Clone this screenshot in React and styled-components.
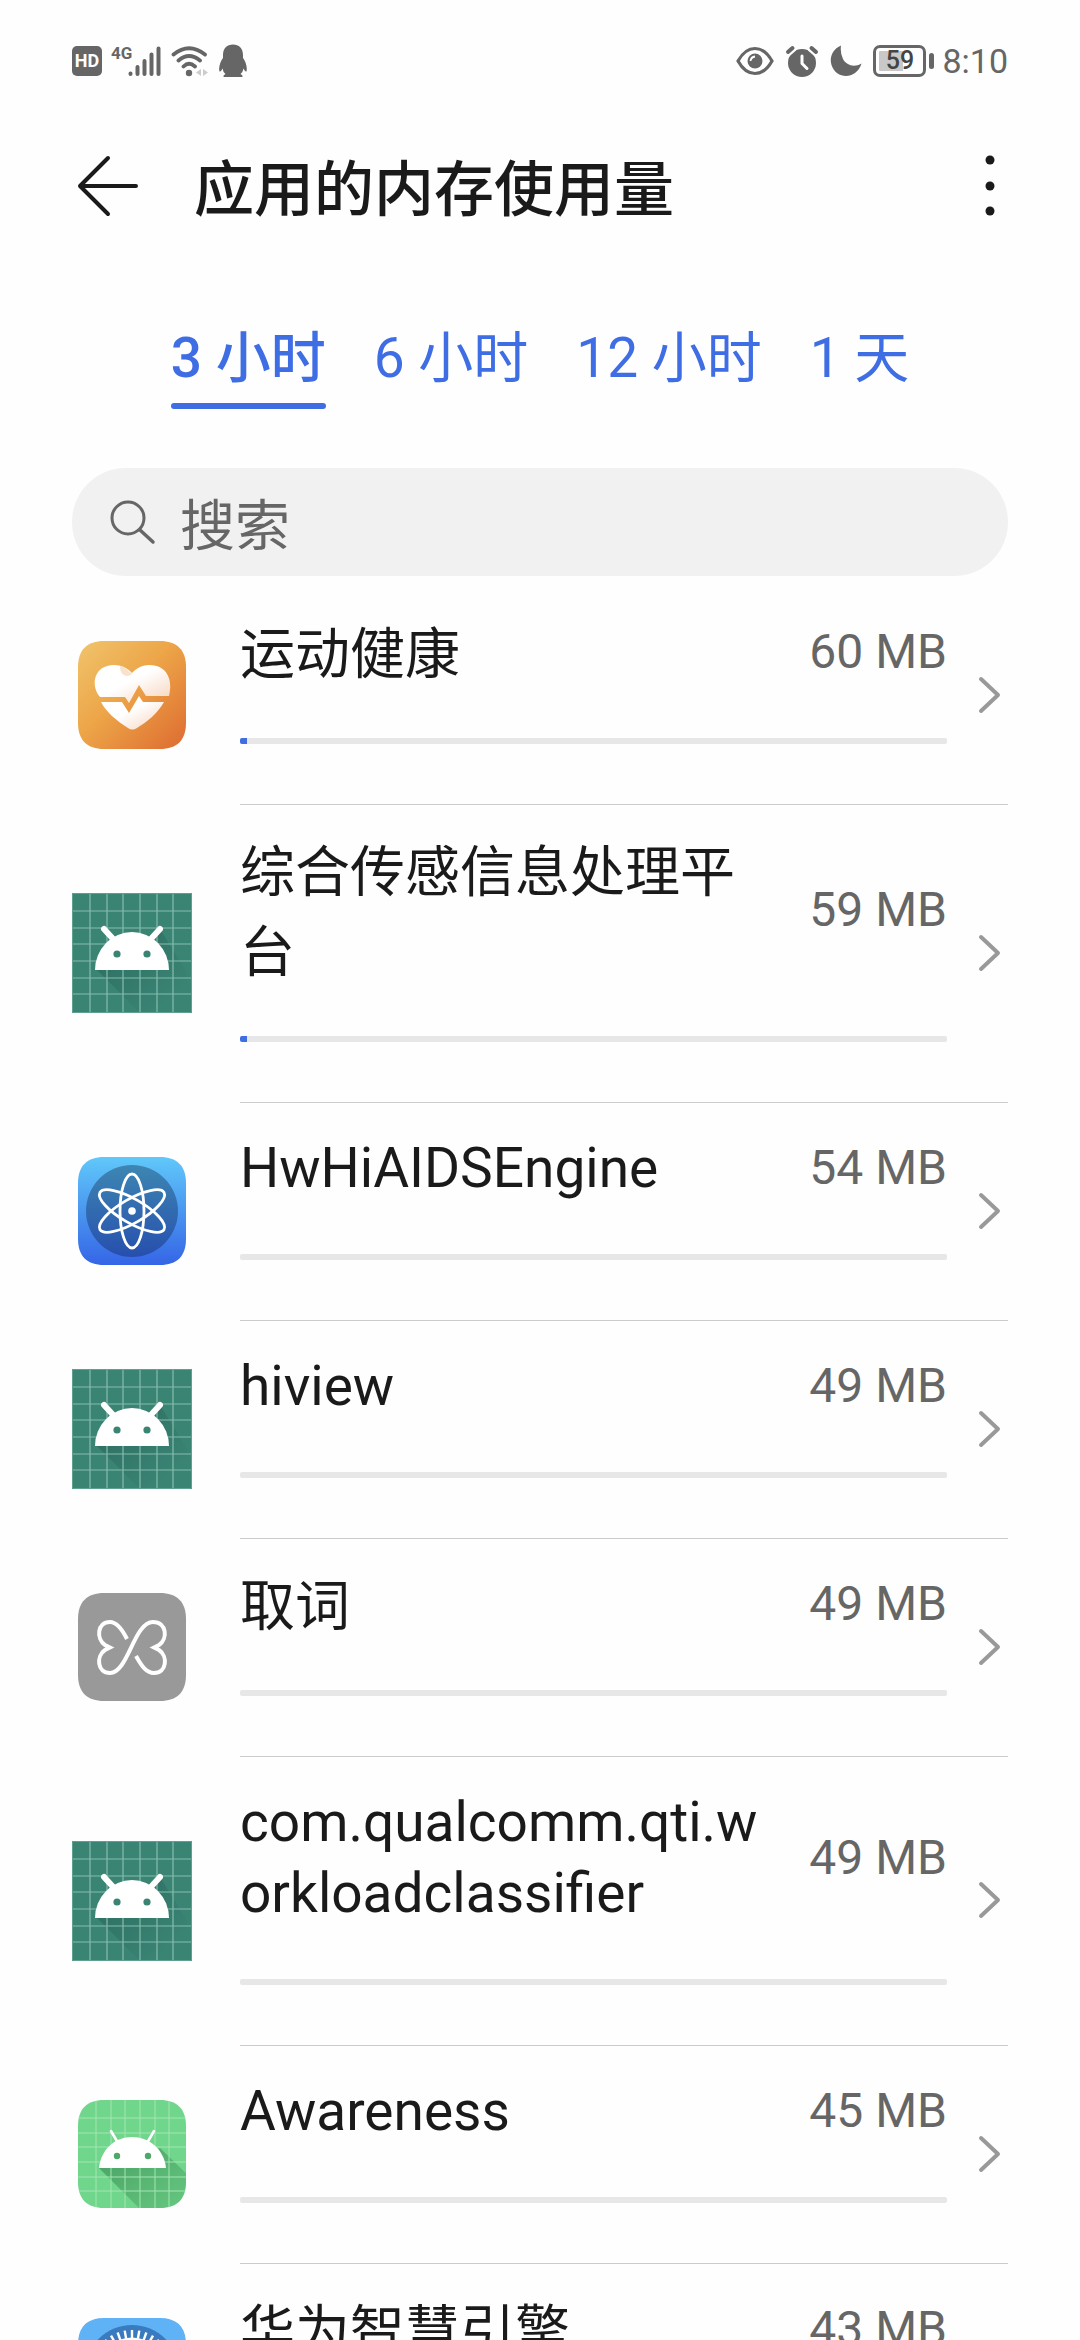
import { useState } from 'react';
import styled, { createGlobalStyle } from 'styled-components';

const GlobalStyle = createGlobalStyle`
  * {
    box-sizing: border-box;
  }
  html, body, #root {
    height: 100%;
  }
  body {
    margin: 0;
    overflow: hidden;
    background: #fefefe;
    color: #1a1a1a;
    font-family: Roboto, "Noto Sans CJK SC", sans-serif;
  }
  button, input {
    font: inherit;
    color: inherit;
    border: 0;
    padding: 0;
    background: none;
  }
`;

const Screen = styled.div`
  height: 100%;
  display: flex;
  flex-direction: column;
  overflow: hidden;
`;

const StatusBar = styled.div`
  flex: none;
  display: flex;
  justify-content: space-between;
  align-items: center;
  height: 120px;
  padding: 2px 72px 0;
  color: #666;
`;

const StatusGroup = styled.div`
  display: flex;
  align-items: center;
  gap: ${props => props.gap}px;
`;

const HdBadge = styled.span`
  width: 30px;
  height: 30px;
  border-radius: 5px;
  background: #666;
  color: #fefefe;
  font-size: 18px;
  font-weight: 700;
  line-height: 30px;
  text-align: center;
`;

const Network = styled.div`
  display: flex;
  align-items: flex-start;
  height: 32px;
  font-size: 17px;
  font-weight: 700;
  line-height: 16px;

  svg {
    margin-left: -4px;
  }
`;

const Battery = styled.div`
  display: flex;
  align-items: center;
  gap: 3px;
`;

const BatteryBody = styled.span`
  width: 53px;
  height: 32px;
  border: 3px solid #666;
  border-radius: 7px;
  padding: 3px;
  color: #444;
  font-size: 25px;
  font-weight: 500;
  line-height: 20px;
  text-align: center;
  background: linear-gradient(to right, #c8c8c8 59%, transparent 59%) content-box;
`;

const BatteryNub = styled.span`
  width: 5px;
  height: 16px;
  border-radius: 3px;
  background: #666;
`;

const Clock = styled.span`
  padding-left: 5px;
  font-size: 34px;
  line-height: 40px;
`;

const Header = styled.header`
  flex: none;
  display: flex;
  align-items: center;
  height: 132px;
  padding: 0 72px;
`;

const IconButton = styled.button`
  display: flex;
  justify-content: center;
  width: ${props => props.width}px;
  cursor: pointer;
`;

const Title = styled.h1`
  flex: 1;
  margin: 0;
  padding: 10px 0 0 50px;
  font-size: 60px;
  font-weight: 500;
  line-height: 88px;
`;

const Tabs = styled.div`
  flex: none;
  display: flex;
  justify-content: center;
  gap: 48px;
  padding: 66px 72px 0;
`;

const Tab = styled.button`
  color: #3f6de3;
  font-size: 55px;
  font-weight: ${props => props.active ? 500 : 400};
  line-height: 80px;
  cursor: pointer;

  &::after {
    content: '';
    display: block;
    height: 6px;
    margin-top: 5px;
    border-radius: 3px;
    background: ${props => props.active ? '#3f6de3' : 'transparent'};
  }
`;

const SearchBox = styled.label`
  flex: none;
  display: flex;
  align-items: center;
  gap: 24px;
  height: 108px;
  margin: 59px 72px 0;
  padding: 0 36px;
  border-radius: 54px;
  background: #f1f1f1;
`;

const SearchInput = styled.input`
  flex: 1;
  min-width: 0;
  height: 88px;
  padding-top: 8px;
  outline: none;
  font-size: 55px;
  &::placeholder {
    color: #666;
    opacity: 1;
  }
`;

const List = styled.ul`
  flex: none;
  list-style: none;
  margin: 0;
  padding: 10px 72px 0;
`;

const AppIcon = styled.svg`
  flex: none;
  width: 120px;
  height: 120px;
`;

const RowContent = styled.div`
  flex: 1;
  display: flex;
  align-items: center;
  justify-content: space-between;
  gap: 24px;
  min-width: 0;
  padding: 25px 0 60px;
  border-top: 1px solid #ccc;
`;

const Row = styled.li`
  display: flex;
  align-items: center;
  gap: 48px;

  &:first-child ${RowContent} {
    border-top-color: transparent;
  }
`;

const Usage = styled.div`
  flex: 1;
  min-width: 0;
`;

const UsageHead = styled.div`
  display: flex;
  align-items: center;
  justify-content: space-between;
  gap: 48px;
  min-height: 80px;
  margin-bottom: 46px;
`;

const Name = styled.div`
  padding: ${props => props.latin ? '5px 0 4px' : '2px 0 0'};
  margin-bottom: ${props => props.latin ? 0 : -2}px;
  font-size: 55px;
  line-height: ${props => props.latin ? 71 : 80}px;
  word-break: break-all;
`;

const Memory = styled.div`
  flex: none;
  color: #666;
  font-size: 48px;
  line-height: 56px;
`;

const Track = styled.div`
  height: 6px;
  border-radius: 2px;
  overflow: hidden;
  background: #e7e7e7;
`;

const Fill = styled.div`
  height: 6px;
  background: #3f6de3;
`;

const Chevron = styled.svg`
  flex: none;
  width: 37px;
  height: 40px;
  margin-top: 33px;
`;

const ROUNDED = 'M32 6H88C105 6 114 15 114 32V88C114 105 105 114 88 114H32C15 114 6 105 6 88V32C6 15 15 6 32 6Z';

function HealthIcon() {
  return (
    <AppIcon viewBox="0 0 120 120" aria-hidden="true">
      <defs>
        <linearGradient id="health-bg" x1="0" y1="0" x2="1" y2="1">
          <stop offset="0" stopColor="#f0c46c" />
          <stop offset="0.45" stopColor="#eda548" />
          <stop offset="1" stopColor="#dd6b30" />
        </linearGradient>
        <linearGradient id="health-heart" x1="0" y1="0" x2="1" y2="1">
          <stop offset="0.45" stopColor="#fff" />
          <stop offset="1" stopColor="#f6d3bb" />
        </linearGradient>
      </defs>
      <path d={ROUNDED} fill="url(#health-bg)" />
      <path d="M28 62C18 50 22 30 42 30C51 30 56 34 60 38C64 34 69 30 77 30C96 30 101 46 97 61H74L67 50L57 68L53 62Z" fill="url(#health-heart)" />
      <path d="M48 31C53 32 57 36 60 39C55 43 48 41 48 31Z" fill="#f5cfa8" opacity="0.6" />
      <path d="M29 67H50L57 78L67 61L71 67H92C86 78 75 87 65 93Q60 96 56 93C45 86 34 77 29 67Z" fill="url(#health-heart)" />
    </AppIcon>
  );
}

function AndroidIcon() {
  const lines = [18, 35, 51, 68, 85, 101];
  return (
    <AppIcon viewBox="0 0 120 120" aria-hidden="true">
      <defs>
        <linearGradient id="android-shade" x1="0" y1="0" x2="1" y2="1">
          <stop offset="0.2" stopColor="#1f594f" stopOpacity="0.45" />
          <stop offset="0.8" stopColor="#1f594f" stopOpacity="0" />
        </linearGradient>
      </defs>
      <path d="M0 0H120V120H0Z" fill="#3a8474" />
      <path d="M24 76L68 120H120V88L88 36Z" fill="url(#android-shade)" />
      {lines.map(n => (
        <path key={n} d={`M${n} 0V120M0 ${n}H120`} stroke="#86bcae" strokeWidth="1.2" />
      ))}
      <path d="M0.5 0.5H119.5V119.5H0.5Z" fill="none" stroke="#5fa091" />
      <path d="M23 77A37 38 0 0 1 97 77Z" fill="#fff" />
      <path d="M32 36L43 48M88 36L77 48" stroke="#fff" strokeWidth="6" strokeLinecap="round" />
      <circle cx="45" cy="61" r="3.6" fill="#3a8474" />
      <circle cx="75" cy="61" r="3.6" fill="#3a8474" />
    </AppIcon>
  );
}

function AtomIcon() {
  return (
    <AppIcon viewBox="0 0 120 120" aria-hidden="true">
      <defs>
        <linearGradient id="atom-bg" x1="0" y1="0" x2="0" y2="1">
          <stop offset="0" stopColor="#60c8fa" />
          <stop offset="1" stopColor="#3565e6" />
        </linearGradient>
        <linearGradient id="atom-disc" x1="0" y1="0" x2="0" y2="1">
          <stop offset="0" stopColor="#3d86b2" />
          <stop offset="1" stopColor="#274fae" />
        </linearGradient>
      </defs>
      <path d={ROUNDED} fill="url(#atom-bg)" />
      <circle cx="60" cy="60" r="46" fill="url(#atom-disc)" />
      {[0, 60, 120].map(angle => (
        <ellipse key={angle} cx="60" cy="60" rx="12" ry="37" transform={`rotate(${angle} 60 60)`} fill="none" stroke="#fff" strokeWidth="2.8" />
      ))}
      <circle cx="60" cy="60" r="3.8" fill="#fff" />
    </AppIcon>
  );
}

function WordIcon() {
  return (
    <AppIcon viewBox="0 0 120 120" aria-hidden="true">
      <path d={ROUNDED} fill="#999" />
      <path
        d="M55 52C50 42 45 35 38 35C25 35 24 52 33 58L38 60.500L33 63C24 69 25 86 38 86C56 86 62 35 81 35C95 35 96 52 87 58L82 60.500L87 63C96 69 95 86 82 86C74 86 69 78 64 69"
        fill="none"
        stroke="#fff"
        strokeWidth="4"
      />
    </AppIcon>
  );
}

function AwarenessIcon() {
  const lines = [24, 39, 53, 68, 83, 97];
  return (
    <AppIcon viewBox="0 0 120 120" aria-hidden="true">
      <defs>
        <clipPath id="aware-clip">
          <path d={ROUNDED} />
        </clipPath>
        <linearGradient id="aware-shade" x1="0" y1="0" x2="1" y2="1">
          <stop offset="0.1" stopColor="#3c8e56" stopOpacity="0.7" />
          <stop offset="1" stopColor="#3c8e56" stopOpacity="0.15" />
        </linearGradient>
      </defs>
      <g clipPath="url(#aware-clip)">
        <path d="M0 0H120V120H0Z" fill="#70d68b" />
        <path d="M27 74L72 119H120V85L88 54Z" fill="url(#aware-shade)" />
        {lines.map(n => (
          <path key={n} d={`M${n} 0V120M0 ${n}H120`} stroke="#a3e6b2" strokeWidth="1" />
        ))}
      </g>
      <path d="M27 74C29 55 43 43 60 43S92 55 94 74Z" fill="#fff" />
      <path d="M39 37L46 49M82 37L75 49" stroke="#fff" strokeWidth="2.6" strokeLinecap="round" />
      <circle cx="45" cy="62" r="3.2" fill="#4fa86a" />
      <circle cx="76" cy="62" r="3.2" fill="#4fa86a" />
    </AppIcon>
  );
}

function EngineIcon() {
  const ticks = Array.from({ length: 36 }, (_, i) => i * 10);
  return (
    <AppIcon viewBox="0 0 120 120" aria-hidden="true">
      <path d={ROUNDED} fill="#5fb2f6" />
      <circle cx="60" cy="60" r="47" fill="#3a7bc0" />
      <circle cx="60" cy="60" r="33" fill="none" stroke="#fff" strokeWidth="3" />
      {ticks.map(angle => (
        <path key={angle} d="M60 18V26" transform={`rotate(${angle} 60 60)`} stroke="#fff" strokeWidth="2.4" />
      ))}
    </AppIcon>
  );
}

const apps = [
  { name: '运动健康', memory: 60, fill: 1, Icon: HealthIcon },
  { name: '综合传感信息处理平台', memory: 59, fill: 1, Icon: AndroidIcon },
  { name: 'HwHiAIDSEngine', memory: 54, fill: 0, latin: true, Icon: AtomIcon },
  { name: 'hiview', memory: 49, fill: 0, latin: true, Icon: AndroidIcon },
  { name: '取词', memory: 49, fill: 0, Icon: WordIcon },
  { name: 'com.qualcomm.qti.workloadclassifier', memory: 49, fill: 0, latin: true, Icon: AndroidIcon },
  { name: 'Awareness', memory: 45, fill: 0, latin: true, Icon: AwarenessIcon },
  { name: '华为智慧引擎', memory: 43, fill: 0, Icon: EngineIcon },
];

const periods = ['3 小时', '6 小时', '12 小时', '1 天'];

function StatusIcons() {
  return (
    <StatusBar>
      <StatusGroup gap={9}>
        <HdBadge>HD</HdBadge>
        <Network>
          <span>4G</span>
          <svg width="34" height="32" viewBox="0 0 34 32" aria-hidden="true">
            <path d="M2.500 28.500V29M9.500 22V29M16.500 16V29M23.500 9.500V29M30.500 3.500V29" stroke="#666" strokeWidth="4" strokeLinecap="round" />
          </svg>
        </Network>
        <svg width="38" height="32" viewBox="0 0 38 32" aria-hidden="true">
          <path d="M2.500 9.500Q18 -3 34 9.500M7.500 15.500Q18 6.500 29 15.500M12.500 21.500Q18 16 24 21.500" fill="none" stroke="#666" strokeWidth="3.800" strokeLinecap="round" />
          <circle cx="18" cy="28" r="3.2" fill="#666" />
          <path d="M30 24V31L25 27.500ZM32 24V31L37 27.500Z" fill="#ccc" />
        </svg>
        <svg width="30" height="34" viewBox="0 0 30 34" aria-hidden="true">
          <path d="M15 0.500C21 0.500 25 4.500 25 11V14C28 18 29.500 24 28.500 27.500Q27 28 25.500 24.500Q25 28 22.500 30Q25 31 24.500 33H5.500Q5 31 7.500 30Q5 28 4.500 24.500Q3 28 1.500 27.500C0.500 24 2 18 5 14V11C5 4.500 9 0.500 15 0.500Z" fill="#666" />
        </svg>
      </StatusGroup>
      <StatusGroup gap={11}>
        <svg width="38" height="30" viewBox="0 0 38 30" aria-hidden="true">
          <path d="M2 15C7 6 12 2.500 19 2.500S31 6 36 15C31 24 26 27.500 19 27.500S7 24 2 15Z" fill="none" stroke="#666" strokeWidth="3.200" />
          <circle cx="19" cy="15" r="7.500" fill="#666" />
          <path d="M14.500 15Q15 11 19 10.500" fill="none" stroke="#fefefe" strokeWidth="1.800" />
        </svg>
        <svg width="34" height="32" viewBox="0 0 34 32" aria-hidden="true">
          <circle cx="17" cy="18" r="14" fill="#666" />
          <path d="M1.500 8.500L8.500 2.500M32.500 8.500L25.500 2.500" stroke="#fefefe" strokeWidth="8" />
          <path d="M3 7L7.500 3M31 7L26.500 3" stroke="#666" strokeWidth="4" strokeLinecap="round" />
          <path d="M17 11V18.500L22 23.500" fill="none" stroke="#fefefe" strokeWidth="3" strokeLinecap="round" strokeLinejoin="round" />
        </svg>
        <svg width="32" height="32" viewBox="0 0 32 32" aria-hidden="true">
          <path d="M11 0.500C3 4 -1 12 1.500 20C5 31 17 34 25 28Q30 24 31.500 18.500C24 23 16 20 13 14Q10 8 11 0.500Z" fill="#666" />
        </svg>
        <Battery>
          <BatteryBody>59</BatteryBody>
          <BatteryNub />
          <Clock>8:10</Clock>
        </Battery>
      </StatusGroup>
    </StatusBar>
  );
}

function App() {
  const [period, setPeriod] = useState(0);
  const [query, setQuery] = useState('');

  return (
    <Screen>
      <GlobalStyle />
      <StatusIcons />
      <Header>
        <IconButton width={72} aria-label="返回">
          <svg width="72" height="72" viewBox="0 0 72 72" aria-hidden="true">
            <path d="M36 8L8 36L36 64M8 36H64" fill="none" stroke="#1a1a1a" strokeWidth="4" strokeLinecap="round" strokeLinejoin="round" />
          </svg>
        </IconButton>
        <Title>应用的内存使用量</Title>
        <IconButton width={36} aria-label="更多">
          <svg width="36" height="72" viewBox="0 0 36 72" aria-hidden="true">
            <circle cx="18" cy="10" r="4.500" fill="#1a1a1a" />
            <circle cx="18" cy="36" r="4.500" fill="#1a1a1a" />
            <circle cx="18" cy="61" r="4.500" fill="#1a1a1a" />
          </svg>
        </IconButton>
      </Header>
      <Tabs role="tablist">
        {periods.map((label, index) => (
          <Tab
            key={label}
            role="tab"
            aria-selected={index === period}
            active={index === period ? 1 : 0}
            onClick={() => setPeriod(index)}
          >
            {label}
          </Tab>
        ))}
      </Tabs>
      <SearchBox>
        <svg width="48" height="48" viewBox="0 0 48 48" aria-hidden="true">
          <circle cx="20" cy="20" r="16" fill="none" stroke="#666" strokeWidth="3" />
          <path d="M32 32L45 44" stroke="#666" strokeWidth="3.500" strokeLinecap="round" />
        </svg>
        <SearchInput
          aria-label="搜索"
          placeholder="搜索"
          value={query}
          onChange={e => setQuery(e.target.value)}
        />
      </SearchBox>
      <List>
        {apps.filter(app => app.name.includes(query)).map(({ name, memory, fill, latin, Icon }) => (
          <Row key={name}>
            <Icon />
            <RowContent>
              <Usage>
                <UsageHead>
                  <Name latin={latin ? 1 : 0}>{name}</Name>
                  <Memory>{memory} MB</Memory>
                </UsageHead>
                <Track>
                  <Fill style={{ width: `${fill}%` }} />
                </Track>
              </Usage>
              <Chevron viewBox="0 0 37 40" aria-hidden="true">
                <path d="M10 4L27 20L10 36" fill="none" stroke="#999" strokeWidth="4" strokeLinecap="round" strokeLinejoin="round" />
              </Chevron>
            </RowContent>
          </Row>
        ))}
      </List>
    </Screen>
  );
}

export default App;
